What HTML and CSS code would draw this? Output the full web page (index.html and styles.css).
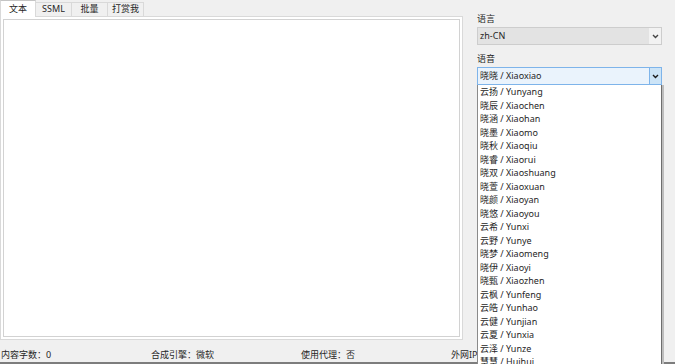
FILE: index.html
```html
<!DOCTYPE html>
<html lang="zh-CN">
<head>
  <meta charset="UTF-8">
  <meta name="viewport" content="width=device-width, initial-scale=1.0">
  <title>TTS</title>
  <link rel="stylesheet" href="styles.css">
</head>
<body>

  <div class="app">
    <div class="main">
      <section class="tabs-area">
        <nav class="tabs">
          <a href="#" class="tab is-active">文本</a>
          <a href="#" class="tab">SSML</a>
          <a href="#" class="tab">批量</a>
          <a href="#" class="tab">打赏我</a>
        </nav>
        <div class="tab-page">
          <textarea class="editor" aria-label="文本"></textarea>
        </div>
      </section>

      <aside class="side">
        <span class="field-label">语言</span>
        <div class="combo is-disabled">
          <span class="combo-text">zh-CN</span>
          <span class="combo-btn"><svg class="chev"><use xlink:href="#chevron"></use></svg></span>
        </div>

        <span class="field-label">语音</span>
        <div class="voice-select">
          <div class="combo is-focus">
            <span class="combo-text">晓晓 / Xiaoxiao</span>
            <span class="combo-btn"><svg class="chev"><use xlink:href="#chevron"></use></svg></span>
          </div>
          <ul class="dropdown">
            <li>云扬 / Yunyang</li>
            <li>晓辰 / Xiaochen</li>
            <li>晓涵 / Xiaohan</li>
            <li>晓墨 / Xiaomo</li>
            <li>晓秋 / Xiaoqiu</li>
            <li>晓睿 / Xiaorui</li>
            <li>晓双 / Xiaoshuang</li>
            <li>晓萱 / Xiaoxuan</li>
            <li>晓颜 / Xiaoyan</li>
            <li>晓悠 / Xiaoyou</li>
            <li>云希 / Yunxi</li>
            <li>云野 / Yunye</li>
            <li>晓梦 / Xiaomeng</li>
            <li>晓伊 / Xiaoyi</li>
            <li>晓甄 / Xiaozhen</li>
            <li>云枫 / Yunfeng</li>
            <li>云皓 / Yunhao</li>
            <li>云健 / Yunjian</li>
            <li>云夏 / Yunxia</li>
            <li>云泽 / Yunze</li>
            <li>慧慧 / Huihui</li>
          </ul>
        </div>
      </aside>
    </div>

    <footer class="status">
      <span class="status-item">内容字数：0</span>
      <span class="status-item">合成引擎：微软</span>
      <span class="status-item">使用代理：否</span>
      <span class="status-item">外网IP：127.0.0.1</span>
    </footer>
  </div>

  <svg aria-hidden="true" style="position: absolute; width: 0; height: 0; overflow: hidden;" version="1.1" xmlns="http://www.w3.org/2000/svg" xmlns:xlink="http://www.w3.org/1999/xlink">
    <defs>
      <symbol id="chevron" viewBox="0 0 7 5">
        <path d="M1 1l2.5 2.5L6 1" fill="none" stroke="currentColor" stroke-width="1.4"></path>
      </symbol>
    </defs>
  </svg>

</body>
</html>
```

FILE: styles.css
```css
/* === Reset === */
*, *::before, *::after { box-sizing: border-box; }
body {
  background: #f0f0f0;
  color: #262626;
  font-family: "Noto Sans", "Noto Sans CJK SC", sans-serif;
  font-size: 9px;
  height: 364px;
  margin: 0;
  overflow: hidden;
}

/* === App frame === */
.app {
  display: flex;
  flex-direction: column;
  height: 364px;
}
.main {
  display: flex;
  height: 340px;
}

/* === Tabs === */
.tabs-area {
  display: flex;
  flex-direction: column;
  width: 463px;
}
.tabs {
  align-items: flex-end;
  display: flex;
  height: 16px;
}
.tab {
  background: #f0f0f0;
  border: 1px solid #d9d9d9;
  border-bottom: none;
  color: inherit;
  height: 14px;
  line-height: 12px;
  margin-right: -1px;
  text-align: center;
  text-decoration: none;
  width: 37px;
}
.tab.is-active {
  background: #fff;
  border-top-color: #c4c4c4;
  height: 17px;
  line-height: 15px;
  margin-bottom: -1px;
  position: relative;
  width: 36px;
  z-index: 1;
}
.tab-page {
  background: #fff;
  border: 1px solid #d9d9d9;
  flex: 1;
  padding: 2px;
}
.editor {
  border: 1px solid #d2d2d2;
  display: block;
  height: 100%;
  margin: 0;
  outline: none;
  resize: none;
  width: 100%;
}

/* === Side panel === */
.side {
  display: flex;
  flex: 1;
  flex-direction: column;
  padding: 12px 0 0 14px;
}
.field-label {
  height: 14px;
  line-height: 14px;
  margin-bottom: 1px;
}
.combo {
  border: 1px solid #cdcdcd;
  display: flex;
  height: 18px;
  margin-bottom: 7px;
  width: 185px;
}
.combo-text {
  background: #e3e3e3;
  flex: 1;
  line-height: 16px;
  padding-left: 2px;
  white-space: nowrap;
}
.combo-btn {
  background: #f2f2f2;
  color: #444;
  display: grid;
  place-items: center;
  width: 12px;
}
.chev {
  height: 5px;
  width: 7px;
}
.combo.is-focus {
  border-color: #7eb4ea;
  margin-bottom: 0;
}
.combo.is-focus .combo-text { background: #eaf3fc; }
.combo.is-focus .combo-btn {
  background: #cce4f7;
  border-left: 1px solid #7eb4ea;
  color: #1a1a1a;
}

/* === Voice dropdown (open) === */
.voice-select {
  position: relative;
  width: 185px;
}
.dropdown {
  background: #fff;
  border-left: 1px solid #8a8a8a;
  border-right: 1px solid #6e6e6e;
  box-shadow: 2px 0 0 #bdbdbd;
  left: 0;
  list-style: none;
  margin: 0;
  padding: 0;
  position: absolute;
  top: 18px;
  width: 185px;
  z-index: 2;
}
.dropdown li {
  line-height: 13.5px;
  padding-left: 2px;
  white-space: nowrap;
}

/* === Status bar === */
.status {
  border-bottom: 2px solid #7d7d7d;
  display: flex;
  height: 24px;
  line-height: 10px;
  padding: 10px 0 0 1px;
  white-space: nowrap;
}
.status-item { width: 150px; }
```
